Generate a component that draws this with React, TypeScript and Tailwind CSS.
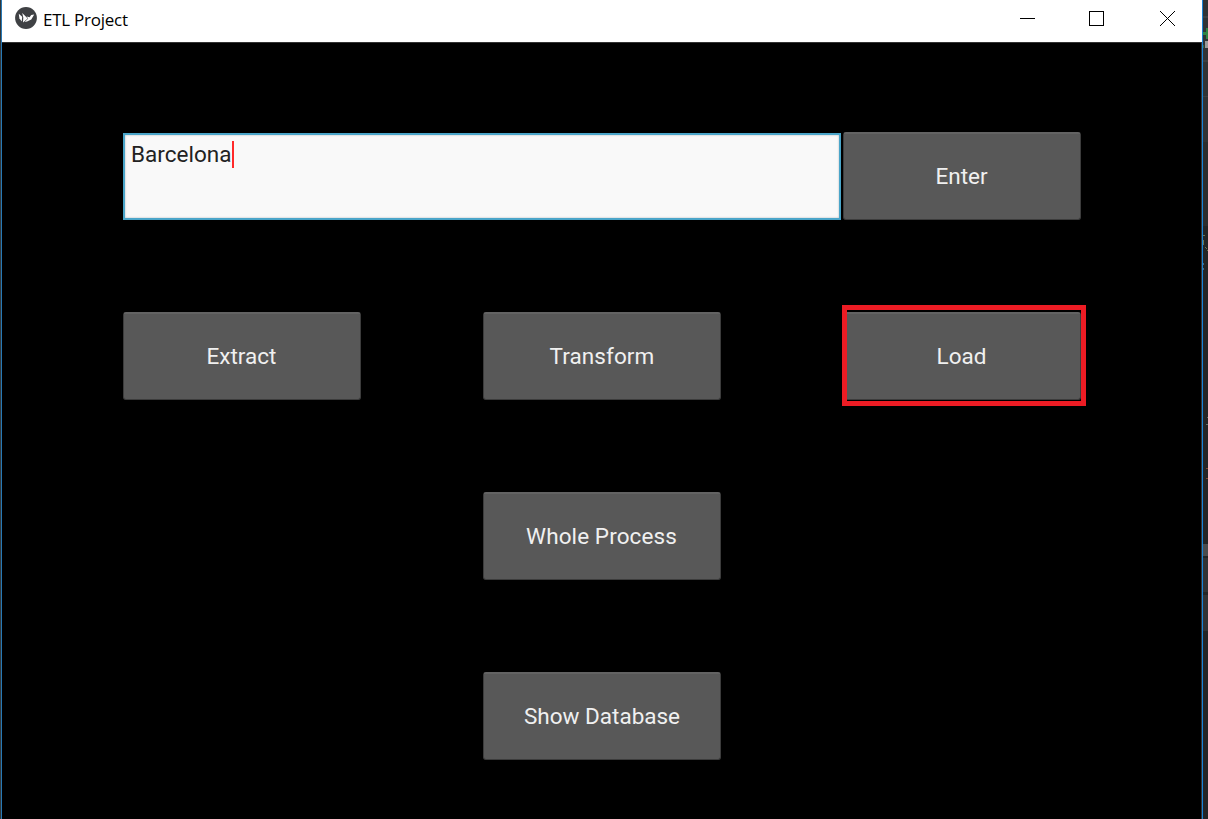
import React from "react";

type ActionButtonProps = {
  label: string;
  className: string;
  textClassName?: string;
  highlighted?: boolean;
};

function ActionButton({ label, className, textClassName = "", highlighted = false }: ActionButtonProps) {
  return (
    <div className={`relative h-[88px] w-[238px] ${className}`}>
      <button className="flex h-full w-full items-center justify-center rounded-[3px] border border-t-2 border-[#3c3c3c] border-t-[#636363] bg-[#585858] pb-px text-[22.5px] leading-[26px] text-[#f0f0f0]">
        <span className={`whitespace-nowrap ${textClassName}`}>{label}</span>
      </button>
      {highlighted && (
        <div className="pointer-events-none absolute -top-[7px] -left-px h-[101px] w-[244px] border-5 border-[#ed1c24]" />
      )}
    </div>
  );
}

function KivyIcon() {
  return (
    <svg className="h-[22px] w-[22px]" viewBox="0 0 22 22">
      <circle cx="11" cy="11" r="10.9" fill="#3f4144" />
      <path d="M3.8 6.8 7.2 9.7 6.7 14.4 4.4 11.2Z" fill="#fff" />
      <path d="M7.2 6.1 12.7 11.5 8 15.6 8.3 10.4Z" fill="#fff" />
      <path d="M11.6 9.6 14.6 10.2 16.2 8.1 19.2 7.5 16.3 12.6 12 14.6 9.6 14.9 13.2 11.5Z" fill="#fff" />
    </svg>
  );
}

function TitleBar() {
  return (
    <header className="flex h-[42px] shrink-0 items-start bg-white text-black">
      <div className="pt-[7px] pl-[13px]">
        <KivyIcon />
      </div>
      <h1 className="ml-[6px] pt-[8px] font-['Open_Sans',sans-serif] text-[17px] leading-6 tracking-[-0.25px]">
        ETL Project
      </h1>
      <svg className="mt-[11px] mr-[26px] ml-auto h-[16px] w-[156px]" viewBox="0 0 156 16" fill="none" stroke="#000" shapeRendering="crispEdges">
        <path d="M0 7.5H15M69.5.5h14v14h-14z" />
        <path d="m140 0 15 15M155 0l-15 15" shapeRendering="geometricPrecision" strokeWidth="1" />
      </svg>
    </header>
  );
}

function BackgroundStrip() {
  return (
    <svg className="h-full w-[5px]" viewBox="0 0 5 819" shapeRendering="crispEdges">
      <path fill="#303335" d="M0 0h5v142H0z" />
      <path fill="#232526" d="M0 142h5v677H0z" />
      <path fill="#3c3f41" d="M0 16h5v2H0zM0 60h5v2H0zM0 96h5v1H0z" />
      <path fill="#2f8544" d="M3 28h2v11H3zM0 32h5v3H0z" />
      <path fill="#999999" d="M2 41h3v7H2z" />
      <path fill="#376940" d="M0 45h1v3H0z" />
      <path fill="#2b2d2e" d="M0 142h5v84H0z" />
      <path fill="#6b7652" d="M0 235h2v1H0zM0 240h1v5H0zM2 247h1v1H2zM3 248h1v1H3zM4 250h1v1H4z" />
      <path fill="#496b7e" d="M0 263h1v2H0zM0 268h1v2H0z" />
      <path fill="#59716a" d="M4 417h1v1H4zM3 424h2v1H3z" />
      <path fill="#804934" d="M3 468h2v1H3zM3 478h2v1H3z" />
      <path fill="#4a4c4e" d="M0 544h5v12H0z" />
      <path fill="#303335" d="M0 558h5v34H0zM0 595h5v36H0z" />
    </svg>
  );
}

export default function App() {
  return (
    <div className="flex h-[819px] w-[1208px] overflow-hidden bg-[#232526] font-[Roboto,sans-serif]">
      <div className="w-px bg-[#30363a]" />
      <div className="w-px bg-[#2879b5]" />
      <div className="flex w-[1200px] flex-col bg-black">
        <TitleBar />
        <main className="grid flex-1 grid-cols-[360px_360px_238px] grid-rows-[180px_180px_180px_88px] border-t border-r border-[#333333] pt-[89px] pl-[121px]">
          <div className="col-span-2 mt-px flex h-[87px] w-[718px] items-start border-2 border-[#4aa5c9] bg-[#f9f9f9] pt-[6px] pl-[6px] shadow-[inset_0_0_2px_#a7afb2]">
            <span className="text-[22.5px] leading-[26px] tracking-[0.02px] text-[#222222]">Barcelona</span>
            <span className="h-[27px] w-[2px] bg-[#ff2a2a]" />
          </div>
          <ActionButton label="Enter" className="col-start-3" textClassName="mr-px" />
          <ActionButton label="Extract" className="row-start-2" textClassName="mr-px" />
          <ActionButton label="Transform" className="row-start-2" textClassName="tracking-[0.08px]" />
          <ActionButton label="Load" className="row-start-2" textClassName="mr-px" highlighted />
          <ActionButton label="Whole Process" className="col-start-2 row-start-3" textClassName="mr-px tracking-[0.1px]" />
          <ActionButton label="Show Database" className="col-start-2 row-start-4" />
        </main>
      </div>
      <div className="w-px bg-[#1883d7]" />
      <BackgroundStrip />
    </div>
  );
}
